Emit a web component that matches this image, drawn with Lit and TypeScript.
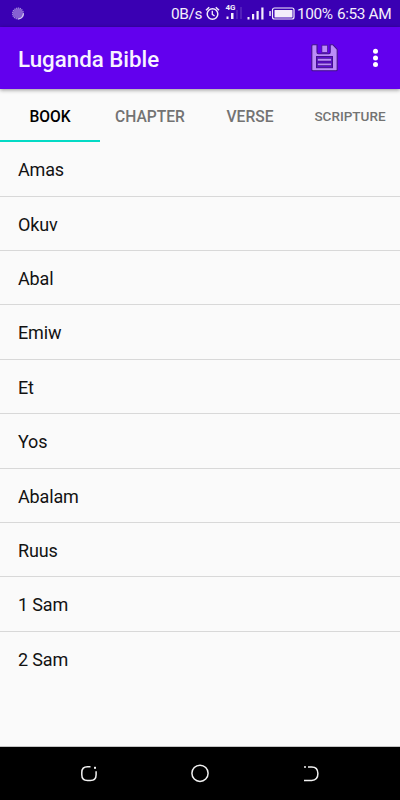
import { LitElement, html, css } from "lit";
import { customElement, property, state } from "lit/decorators.js";
import { classMap } from "lit/directives/class-map.js";

@customElement("status-bar")
class StatusBar extends LitElement {
  static styles = css`
    :host { display: flex; height: 27px; background: #3a00b3; color: #f3eefb; font-size: 15.4px; letter-spacing: -.4px; line-height: 28px; white-space: pre; }
    svg { display: block; flex: none; }
    .spacer { flex: 1; }
    .rate { width: 34px; }
    .pct { width: 40px; }
    .time { width: 63px; }
    .g4 { font: 700 8px Roboto, sans-serif; letter-spacing: 0; }
  `;
  render() {
    return html`
      <svg width="40" height="27" viewBox="0 0 40 27">
        <circle cx="18" cy="13.5" r="5" fill="#8660d2" />
        <circle cx="18" cy="13.5" r="5.4" fill="none" stroke="#a58edf" stroke-width="1.2" stroke-dasharray="1.2 .7" />
        <path d="M23.4 13.5a5.5 5.5 0 0 1-5.4 5.5" fill="none" stroke="#d3c7f2" stroke-width="1.2" />
      </svg>
      <div class="spacer"></div>
      <div class="rate">0B/s</div>
      <svg width="92" height="27" viewBox="205 0 92 27" fill="none" stroke="#f3eefb">
        <circle cx="212.5" cy="14" r="5.3" stroke-width="1.5" />
        <path d="M206 10.2l3.2-2.9M219 10.2l-3.2-2.9" stroke-width="1.5" />
        <path d="M212.3 10.8v3.6l2.3 1.6" stroke-width="1.3" />
        <text class="g4" x="225.5" y="10" fill="#f3eefb" stroke="none" textLength="10">4G</text>
        <g fill="#f3eefb" stroke="none">
          <rect x="226.5" y="16.5" width="2" height="2.5" />
          <rect x="231" y="13" width="2.5" height="6" />
          <g opacity=".13"><rect x="236" y="10" width="2" height="9" /><rect x="240" y="7" width="2" height="12" /></g>
          <rect x="247.5" y="17" width="2" height="2.5" />
          <rect x="252" y="14" width="2.2" height="5.5" />
          <rect x="256.5" y="11" width="2.2" height="8.5" />
          <rect x="261.3" y="7.5" width="2.2" height="12" />
          <rect x="269.3" y="11" width="1.5" height="5" rx=".5" />
          <rect x="274.5" y="10" width="18" height="7.5" rx=".5" />
        </g>
        <rect x="272.5" y="8" width="21.5" height="11" rx="2" stroke-width="1.2" />
      </svg>
      <div class="pct">100%</div>
      <div class="time">6:53 AM</div>
    `;
  }
}

@customElement("app-bar")
class AppBar extends LitElement {
  @property() heading = "";
  static styles = css`
    :host { display: flex; align-items: center; height: 61.5px; background: #6200ee; color: #f8f3ff; position: relative; z-index: 1; box-shadow: 0 1px 4px rgba(0, 0, 0, .42); }
    h1 { flex: 1; margin: 3px 0 0 18px; font-size: 22.3px; font-weight: 500; line-height: 28px; }
    svg { display: block; }
  `;
  render() {
    return html`
      <h1>${this.heading}</h1>
      <svg width="90" height="61" viewBox="310 27 90 61">
        <path d="M312.8 44.7h4.2v7.6q0 1.4 1.4 1.4h10.4q1.4 0 1.4-1.4v-7.6h2.6l4.4 4.8v20.2q0 1-1 1h-23.4q-1 0-1-1v-24q0-1 1-1z" fill="#bb8cf8" stroke="#42108c" stroke-width="1.1" />
        <rect x="321.9" y="45.2" width="5.6" height="7.4" fill="#bb8cf8" stroke="#42108c" stroke-width=".7" />
        <rect x="316.5" y="56.5" width="16" height="11.2" fill="#5c0dd0" stroke="#42108c" />
        <path d="M317.5 59.8h13.8M317.5 64.4h13.8" stroke="#42108c" stroke-width="3.2" />
        <path d="M317.8 59.8h13.3M317.8 64.4h13.3" stroke="#bb8cf8" stroke-width="1.9" />
        <g fill="#fff"><circle cx="375.5" cy="51.3" r="2.5" /><circle cx="375.5" cy="57.9" r="2.5" /><circle cx="375.5" cy="64.5" r="2.5" /></g>
      </svg>
    `;
  }
}

@customElement("nav-bar")
class NavBar extends LitElement {
  static styles = css`
    :host { display: block; height: 53px; background: #000; border-top: 1px solid #c4c4c4; }
    svg { display: block; }
  `;
  render() {
    return html`
      <svg width="400" height="53" viewBox="0 747 400 53" fill="none" stroke="#f2f2f2" stroke-width="1.5">
        <path d="M90.5 766.7h-3q-5.7 0-5.7 5.7v2.3q0 5.7 5.7 5.7h2.9q5.7 0 5.7-5.7v-3.5" />
        <rect x="94" y="766.8" width="2" height="2" fill="#f2f2f2" stroke="none" />
        <circle cx="200" cy="773.3" r="8.1" />
        <path d="M308 766.9h3.7q6.2 0 6.2 6.7t-6.2 6.8H304M304 766.9h2" />
      </svg>
    `;
  }
}

@customElement("app-root")
class AppRoot extends LitElement {
  @state() private active = 0;
  private tabs = ["BOOK", "CHAPTER", "VERSE", "SCRIPTURE"];
  private books = ["Amas", "Okuv", "Abal", "Emiw", "Et", "Yos", "Abalam", "Ruus", "1 Sam", "2 Sam"];

  static styles = css`
    :host { display: flex; flex-direction: column; height: 800px; overflow: hidden; background: #fafafa; font-family: Roboto, sans-serif; }
    .tabs { display: grid; grid-template-columns: repeat(4, 1fr); height: 53.8px; flex: none; }
    .tab { display: flex; align-items: center; justify-content: center; box-sizing: border-box; padding-top: 5px; border: 0 solid transparent; border-bottom-width: 2px; font-size: 15.6px; font-weight: 500; color: #737373; }
    .tab.active { color: #000; border-bottom-color: #03dac5; }
    .tab.small { font-size: 13.5px; padding-top: 3px; }
    .list { flex: 1; margin: 0; padding: 0; list-style: none; }
    .row { box-sizing: border-box; height: 54.4px; padding-left: 18px; line-height: 55.4px; font-size: 18px; letter-spacing: -.15px; color: #121212; border-bottom: 1px solid #d8d8d8; }
    .row:last-child { border-bottom: 0; }
  `;
  render() {
    return html`
      <status-bar></status-bar>
      <app-bar heading="Luganda Bible"></app-bar>
      <div class="tabs">
        ${this.tabs.map((t, i) => html`<div class=${classMap({ tab: true, active: i === this.active, small: t.length > 8 })} @click=${() => (this.active = i)}>${t}</div>`)}
      </div>
      <ul class="list">${this.books.map((b) => html`<li class="row">${b}</li>`)}</ul>
      <nav-bar></nav-bar>
    `;
  }
}
